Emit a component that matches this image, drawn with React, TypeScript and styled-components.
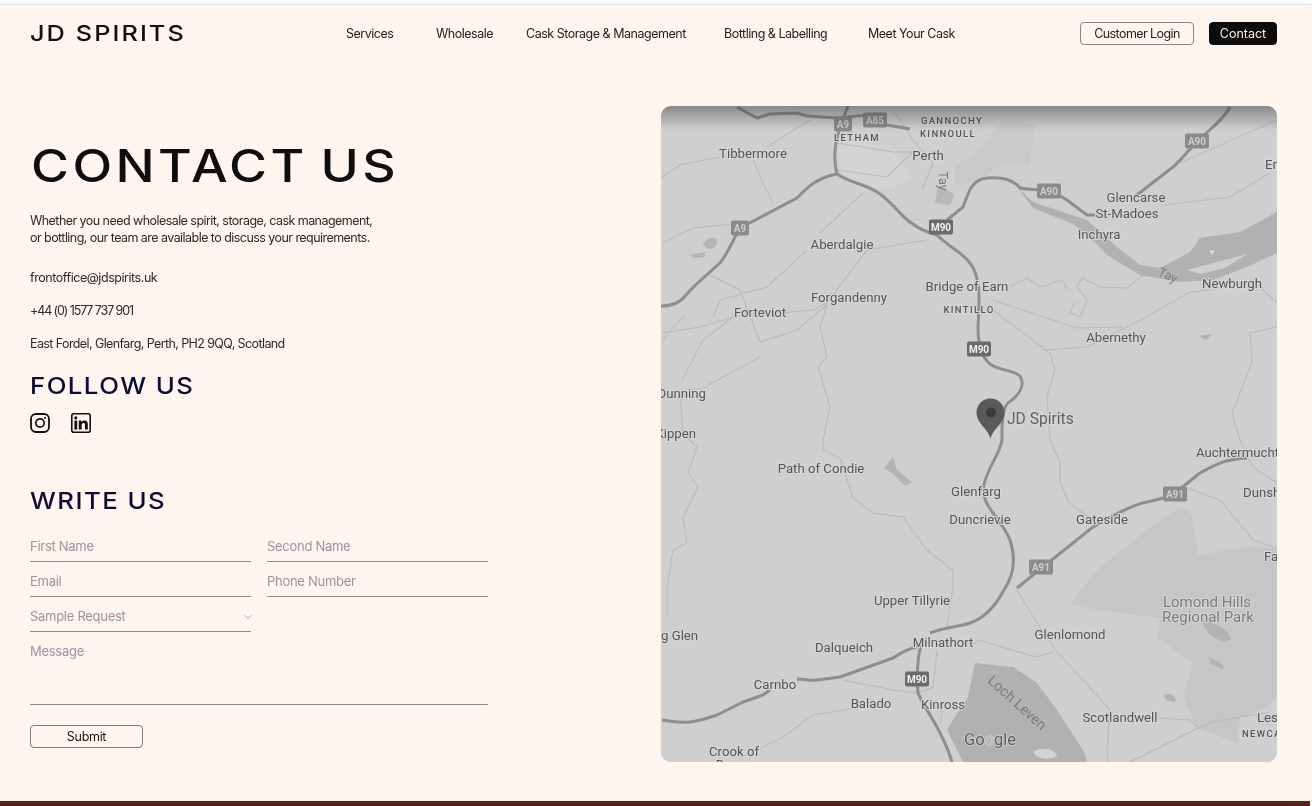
import React from 'react';
import styled, { createGlobalStyle } from 'styled-components';
import { ChevronDown } from 'lucide-react';

const GlobalStyle = createGlobalStyle`
  html, body {
    margin: 0;
    padding: 0;
    background: #f6f5f4;
  }
  * {
    box-sizing: border-box;
  }
`;

const Page = styled.div`
  width: 1312px;
  height: 806px;
  display: flex;
  flex-direction: column;
  overflow: hidden;
  font-family: Inter, "Liberation Sans", sans-serif;
  color: #1b1a1a;
  filter: blur(0.3px);
`;

const TopEdge = styled.div`
  height: 5px;
  flex: none;
  background: #fbfbfb;
  border-bottom: 1px solid #e1e3e5;
`;

const Canvas = styled.div`
  flex: 1;
  margin-right: 2px;
  background: #fff5ef;
  display: flex;
  flex-direction: column;
`;

const Header = styled.header`
  height: 101px;
  flex: none;
  display: grid;
  grid-template-columns: 316px 1fr auto;
  align-items: start;
  padding: 17px 33px 0 30px;
`;

const Logo = styled.div`
  font-size: 22px;
  line-height: 22px;
  font-weight: 500;
  letter-spacing: 1.8px;
  color: #111;
  white-space: nowrap;
  transform: scaleX(1.15);
  transform-origin: left center;
`;

const Nav = styled.nav`
  display: grid;
  grid-template-columns: 90px 90px 198px 144px auto;
  height: 23px;
  align-items: center;
`;

const NavLink = styled.a`
  font-size: 12.5px;
  letter-spacing: -0.48px;
  color: #222;
  white-space: nowrap;
`;

const HeaderActions = styled.div`
  display: flex;
  gap: 15px;
`;

const HeaderButton = styled.button<{ $dark?: boolean }>`
  height: 23px;
  width: ${(p) => (p.$dark ? '68px' : '114px')};
  padding: 0;
  border-radius: 4px;
  border: 1px solid ${(p) => (p.$dark ? '#0c0c0c' : '#8b8583')};
  background: ${(p) => (p.$dark ? '#0c0c0c' : 'transparent')};
  color: ${(p) => (p.$dark ? '#f6f1ee' : '#222')};
  font-family: inherit;
  font-size: 12.5px;
  letter-spacing: ${(p) => (p.$dark ? '0' : '-0.58px')};
`;

const Main = styled.main`
  flex: 1;
  display: grid;
  grid-template-columns: 661px 616px;
  min-height: 0;
`;

const LeftColumn = styled.section`
  padding-left: 30px;
  display: flex;
  flex-direction: column;
  align-items: flex-start;
`;

const Title = styled.h1`
  margin: 35px 0 0 1px;
  font-size: 45px;
  line-height: 50px;
  font-weight: 500;
  letter-spacing: 3px;
  word-spacing: -4px;
  color: #0e0e0e;
  white-space: nowrap;
  transform: scaleX(1.15);
  transform-origin: left center;
`;

const Intro = styled.p`
  margin: 21px 0 0;
  font-size: 12.5px;
  line-height: 17px;
  letter-spacing: -0.55px;
  color: #2b2a2a;
`;

const ContactList = styled.div`
  margin-top: 23px;
  display: flex;
  flex-direction: column;
  gap: 16px;
`;

const ContactLine = styled.div<{ $spacing: number }>`
  font-size: 12.5px;
  line-height: 17px;
  letter-spacing: ${(p) => p.$spacing}px;
  color: #2b2a2a;
`;

const SectionTitle = styled.h2<{ $top: number }>`
  margin: ${(p) => p.$top}px 0 0;
  font-size: 23px;
  line-height: 28px;
  font-weight: 500;
  letter-spacing: 1.3px;
  color: #0c0c33;
  white-space: nowrap;
  transform: scaleX(1.12);
  transform-origin: left center;
`;

const Socials = styled.div`
  margin-top: 13px;
  display: flex;
  gap: 21px;
  color: #111;
`;

const Form = styled.form`
  margin-top: 12px;
  width: 458px;
  display: grid;
  grid-template-columns: 221px 221px;
  column-gap: 16px;
`;

const fieldStyle = `
  width: 100%;
  height: 35px;
  padding: 4px 0 0;
  border: 0;
  border-bottom: 1px solid #8f8994;
  background: transparent;
  outline: none;
  font-family: inherit;
  font-size: 13px;
  letter-spacing: -0.28px;
  color: #9a949e;
  &::placeholder {
    color: #9a949e;
    opacity: 1;
  }
`;

const Input = styled.input`
  ${fieldStyle}
`;

const SelectWrap = styled.div`
  position: relative;
  color: #a29da8;
`;

const Select = styled.select`
  ${fieldStyle}
  appearance: none;
  display: block;
`;

const SelectChevron = styled(ChevronDown)`
  position: absolute;
  right: -3px;
  top: 14px;
`;

const Message = styled.textarea`
  ${fieldStyle}
  grid-column: 1 / 3;
  height: 73px;
  padding-top: 11px;
  resize: none;
  display: block;
`;

const Submit = styled.button`
  margin-top: 20px;
  width: 113px;
  height: 23px;
  padding: 0;
  border: 1px solid #7d7875;
  border-radius: 4px;
  background: transparent;
  font-family: inherit;
  font-size: 12.5px;
  letter-spacing: -0.3px;
  color: #151515;
`;

const MapFrame = styled.div`
  position: relative;
  height: 656px;
  border-radius: 10px;
  overflow: hidden;
  background: #cfcfcf;
`;

const MapDrawing = styled.svg`
  display: block;
  width: 616px;
  height: 656px;
`;

const MapShade = styled.div`
  position: absolute;
  inset: 0 0 auto 0;
  height: 24px;
  background: linear-gradient(to bottom, rgba(40, 40, 40, 0.42), rgba(40, 40, 40, 0));
`;

const PlaceLabel = styled.text<{ $small?: boolean; $park?: boolean }>`
  font-family: Roboto, "Liberation Sans", sans-serif;
  font-size: ${(p) => (p.$small ? '9.5px' : p.$park ? '15px' : '13.2px')};
  font-weight: ${(p) => (p.$small ? 500 : 400)};
  letter-spacing: ${(p) => (p.$small ? '1.35px' : '0')};
  fill: ${(p) => (p.$park ? '#7a7a7a' : '#555')};
  stroke: #d6d6d6;
  stroke-width: 2px;
  paint-order: stroke;
  dominant-baseline: central;
`;

const ShieldText = styled.text`
  font-family: Roboto, "Liberation Sans", sans-serif;
  font-size: 10px;
  font-weight: 700;
  text-anchor: middle;
  dominant-baseline: central;
`;

const PinLabel = styled.text`
  font-family: Roboto, "Liberation Sans", sans-serif;
  font-size: 15.6px;
  fill: #606060;
  stroke: #d6d6d6;
  stroke-width: 2px;
  paint-order: stroke;
  dominant-baseline: central;
`;

const WaterLabel = styled.text<{ $size: number }>`
  font-family: Roboto, "Liberation Sans", sans-serif;
  font-size: ${(p) => p.$size}px;
  fill: #7c7c7c;
  text-anchor: middle;
  dominant-baseline: central;
`;

const GoogleMark = styled.text`
  font-family: Roboto, "Liberation Sans", sans-serif;
  font-size: 16.5px;
  fill: #5b5b5b;
  stroke: #d2d2d2;
  stroke-width: 1.5px;
  paint-order: stroke;
  dominant-baseline: central;
`;

const BottomBar = styled.div`
  height: 5px;
  flex: none;
  background: #5e201c;
`;

type Anchor = 'start' | 'middle' | 'end';

const places: { text: string; x: number; y: number; anchor?: Anchor; small?: boolean; park?: boolean }[] = [
  { text: 'Tibbermore', x: 753, y: 153 },
  { text: 'Perth', x: 928, y: 155 },
  { text: 'LETHAM', x: 857, y: 137, small: true },
  { text: 'GANNOCHY', x: 952, y: 120, small: true },
  { text: 'KINNOULL', x: 948, y: 133, small: true },
  { text: 'Er', x: 1265, y: 164, anchor: 'start' },
  { text: 'Glencarse', x: 1136, y: 197 },
  { text: 'St-Madoes', x: 1127, y: 213 },
  { text: 'Inchyra', x: 1099, y: 234 },
  { text: 'Aberdalgie', x: 842, y: 244 },
  { text: 'Forgandenny', x: 849, y: 297 },
  { text: 'Forteviot', x: 760, y: 312 },
  { text: 'Bridge of Earn', x: 967, y: 286 },
  { text: 'KINTILLO', x: 969, y: 309, small: true },
  { text: 'Newburgh', x: 1232, y: 283 },
  { text: 'Abernethy', x: 1116, y: 337 },
  { text: 'Dunning', x: 706, y: 393, anchor: 'end' },
  { text: 'Kippen', x: 696, y: 433, anchor: 'end' },
  { text: 'Path of Condie', x: 821, y: 468 },
  { text: 'Auchtermuchty', x: 1196, y: 452, anchor: 'start' },
  { text: 'Dunshelt', x: 1243, y: 492, anchor: 'start' },
  { text: 'Glenfarg', x: 976, y: 491 },
  { text: 'Duncrievie', x: 980, y: 519 },
  { text: 'Gateside', x: 1102, y: 519 },
  { text: 'Falkland', x: 1264, y: 556, anchor: 'start' },
  { text: 'Upper Tillyrie', x: 912, y: 600 },
  { text: 'Lomond Hills', x: 1207, y: 602, park: true },
  { text: 'Regional Park', x: 1208, y: 617, park: true },
  { text: 'g Glen', x: 661, y: 635, anchor: 'start' },
  { text: 'Glenlomond', x: 1070, y: 634 },
  { text: 'Milnathort', x: 943, y: 642 },
  { text: 'Dalqueich', x: 844, y: 647 },
  { text: 'Carnbo', x: 775, y: 684 },
  { text: 'Balado', x: 871, y: 703 },
  { text: 'Kinross', x: 943, y: 704 },
  { text: 'Scotlandwell', x: 1120, y: 717 },
  { text: 'Leslie', x: 1257, y: 717, anchor: 'start' },
  { text: 'NEWCASTLE', x: 1242, y: 733, anchor: 'start', small: true },
  { text: 'Crook of', x: 734, y: 751 },
  { text: 'Devon', x: 734, y: 764 },
];

const shields: { text: string; x: number; y: number; motorway?: boolean }[] = [
  { text: 'A9', x: 843, y: 124 },
  { text: 'A85', x: 875, y: 120 },
  { text: 'A90', x: 1197, y: 141 },
  { text: 'A90', x: 1049, y: 191 },
  { text: 'A9', x: 740, y: 228 },
  { text: 'M90', x: 941, y: 227, motorway: true },
  { text: 'M90', x: 979, y: 349, motorway: true },
  { text: 'A91', x: 1175, y: 494 },
  { text: 'A91', x: 1041, y: 567 },
  { text: 'M90', x: 917, y: 679, motorway: true },
];

const mainRoads = [
  'M661 306 C672 306 680 303 686 295 C695 284 708 274 720 263 C728 253 733 240 740 228 L797 198 C805 190 815 178 837 174 C833 160 835 143 838 134 C841 124 845 114 848 106',
  'M837 174 C852 184 867 184 880 194 C895 205 902 218 913 224 C920 230 930 233 937 235 C950 248 962 252 970 263 C982 278 979 305 978 327 C978 342 980 355 990 364 C1000 371 1014 370 1020 376 C1026 386 1018 396 1008 403 C1001 410 1002 430 1002 440 C1000 455 985 470 983 490 C984 508 1002 520 1010 540 C1016 558 1014 575 1004 590 C996 605 985 618 970 623 C958 627 945 627 930 633',
  'M921 645 C917 660 917 680 918 693 C925 708 935 722 941 735 C946 745 950 755 952 762',
  'M947 220 L963 207 C968 195 970 183 982 179 C992 177 1010 176 1020 188 C1030 190 1040 190 1050 190 L1067 200 L1087 215 L1095 215',
  'M1230 107 C1224 120 1208 130 1197 142 C1190 148 1185 156 1173 167 L1133 198',
  'M1017 588 L1043 567 L1093 527 C1105 520 1130 505 1147 502 C1160 499 1170 497 1175 493 L1200 473 C1215 465 1225 459 1247 458',
  'M662 720 C675 722 682 723 690 722 C700 721 708 718 717 715 L743 702 L763 695 L770 690',
  'M797 679 C805 679 810 681 817 680 L840 677 L893 658 C900 654 906 649 917 647',
  'M737 107 L757 118 L770 114 L797 113 L807 116 L837 118 L867 115 L887 125 L910 129',
];

const minorRoads = [
  'M662 177 L680 165 L720 157',
  'M753 160 L763 183 L773 203',
  'M767 147 L810 120',
  'M662 243 L693 228 L732 224',
  'M820 233 L863 193',
  'M710 275 L740 290 L760 342',
  'M713 317 L720 300 L767 287 L807 250',
  'M662 333 L700 327 L733 317 L813 310 L827 303 L867 250 L927 240',
  'M760 342 L797 330 L827 305',
  'M827 305 L820 327 L827 357 L818 367 L830 407 L823 440 L823 450 L840 458 L853 498 L873 513 L903 517 L927 550 L953 570 L953 587 L947 627',
  'M682 380 L703 340 L733 317',
  'M760 357 L703 388 L680 393 L683 433 L697 447 L688 473 L698 487 L683 517 L687 543 L673 550 L667 590 L667 617',
  'M1010 287 L1027 278 L1040 287 L1063 280 L1067 290',
  'M1077 287 L1082 278 L1100 287 L1127 288 L1143 275',
  'M1077 287 L1087 300 L1080 317 L1070 313 L1075 302',
  'M993 310 L1050 353 L1055 370 L1047 397 L1050 440 L1060 463 L1060 480 L1068 502 L1090 518',
  'M1043 350 L1087 347 L1137 322 L1190 292 L1210 290',
  'M993 300 L1077 328 L1123 327',
  'M1165 205 L1230 197 L1270 173',
  'M1180 163 L1277 120',
  'M1277 327 L1250 333 L1252 363 L1232 413 L1240 440 L1253 467 L1277 483',
  'M1187 488 L1220 500 L1253 540 L1277 548',
  'M1260 287 L1277 303',
  'M1017 590 L1037 623 L1057 652 L1083 680 L1110 710 L1107 750 L1108 762',
  'M973 643 L980 640 L1035 657 L1053 652',
  'M1158 718 L1190 720 L1198 728 L1213 722 L1270 712',
  'M1198 728 L1130 762',
  'M843 680 L893 690 L917 693',
  'M857 708 L813 715 L783 737 L740 758',
  'M937 650 L933 687 L917 693',
  'M943 710 L940 723',
  'M837 143 L893 152 L913 152 L887 177 L837 170',
  'M922 190 L933 163 L913 140 L893 110',
  'M662 340 L685 315',
];

const mapBlobs = [
  { d: 'M1070 605 C1085 585 1095 570 1113 557 C1135 540 1160 518 1180 508 C1190 510 1193 515 1193 520 L1198 555 L1247 547 L1277 548 L1277 697 L1265 708 L1240 718 L1237 743 L1197 728 L1183 697 L1193 663 L1157 637 L1160 618 L1113 612 Z', fill: '#c6c6c6' },
  { d: 'M1202 620 C1215 622 1232 632 1230 640 C1222 644 1205 636 1202 620 Z', fill: '#b3b3b3' },
  { d: 'M1209 657 L1222 664 L1224 670 L1211 664 Z', fill: '#b3b3b3' },
  { d: 'M1164 695 C1170 692 1176 696 1176 701 C1170 703 1164 700 1164 695 Z', fill: '#b3b3b3' },
  { d: 'M975 663 L1013 667 L1037 683 L1057 710 L1083 750 L1087 762 L963 762 L947 730 L953 720 L968 697 Z', fill: '#b1b1b1' },
  { d: 'M1033 752 C1042 746 1055 749 1057 756 C1050 760 1038 760 1033 752 Z', fill: '#d4d4d4' },
  { d: 'M1017 187 L1033 202 L1087 220 L1117 247 L1140 265 L1160 268 L1190 252 L1200 238 L1240 232 L1277 212 L1277 253 L1247 267 L1213 280 L1180 282 L1140 275 L1107 255 L1093 240 L1073 224 L1033 208 Z', fill: '#b1b1b1' },
  { d: 'M1187 270 L1213 263 L1247 254 L1225 268 L1200 274 Z', fill: '#cfcfcf' },
  { d: 'M1209 251 L1215 250 L1212 255 Z', fill: '#dcdcdc' },
  { d: 'M893 457 L897 470 L912 482 L905 486 L893 474 L884 468 Z', fill: '#b4b4b4' },
  { d: 'M703 244 C708 236 718 236 717 243 C715 250 705 251 703 244 Z', fill: '#b4b4b4' },
  { d: 'M689 255 L705 252 L705 257 L695 258 Z', fill: '#b4b4b4' },
  { d: 'M1199 336 L1212 334 L1206 340 Z', fill: '#b1b1b1' },
  { d: 'M955 165 L975 155 L1003 120 L1035 125 L1030 165 L1000 165 L980 180 L955 185 Z', fill: '#c9c9c9' },
  { d: 'M938 185 L955 195 L950 205 L935 203 Z', fill: '#b8b8b8' },
  { d: 'M837 140 L895 147 L910 180 L880 190 L840 172 Z', fill: '#d3d3d3' },
];

const RoadMap: React.FC = () => (
  <MapDrawing viewBox="661 106 616 656" aria-label="Map of the area around JD Spirits">
    <rect x="661" y="106" width="616" height="656" fill="#cfcfcf" />
    {mapBlobs.map((blob) => (
      <path key={blob.d} d={blob.d} fill={blob.fill} />
    ))}
    {minorRoads.map((d) => (
      <path key={d} d={d} fill="none" stroke="#bababa" strokeWidth="1.1" />
    ))}
    {mainRoads.map((d) => (
      <path key={d} d={d} fill="none" stroke="#8e8e8e" strokeWidth="3" strokeLinejoin="round" />
    ))}
    <WaterLabel $size={12.5} x="1168" y="275" transform="rotate(25 1168 275)">Tay</WaterLabel>
    <WaterLabel $size={12.5} x="943" y="181" transform="rotate(90 943 181)">Tay</WaterLabel>
    <WaterLabel $size={14.5} x="1017" y="703" transform="rotate(42 1017 703)">Loch Leven</WaterLabel>
    {shields.map((s) => (
      <g key={`${s.text}-${s.x}`}>
        <rect
          x={s.x - (s.text.length > 2 ? 12 : 9)}
          y={s.y - 7.5}
          width={s.text.length > 2 ? 24 : 18}
          height="15"
          rx="2"
          fill={s.motorway ? '#6a6a6a' : '#8b8b8b'}
        />
        <ShieldText x={s.x} y={s.y} fill={s.motorway ? '#f0f0f0' : '#cdcdcd'}>
          {s.text}
        </ShieldText>
      </g>
    ))}
    {places.map((p) => (
      <PlaceLabel key={p.text} x={p.x} y={p.y} textAnchor={p.anchor ?? 'middle'} $small={p.small} $park={p.park}>
        {p.text}
      </PlaceLabel>
    ))}
    <path
      d="M990.5 439 C988 428 976.5 424 976.5 412.5 C976.5 404.5 983 398.5 990.5 398.5 C998 398.5 1004.5 404.5 1004.5 412.5 C1004.5 424 993 428 990.5 439 Z"
      fill="#5a5a5a"
    />
    <circle cx="991" cy="412.5" r="5" fill="#3a3a3a" />
    <PinLabel x="1007" y="419">JD Spirits</PinLabel>
    <GoogleMark x="964" y="739">
      Go<tspan fill="#b8b8b8">o</tspan>gle
    </GoogleMark>
  </MapDrawing>
);

const InstagramIcon: React.FC = () => (
  <svg width="20" height="20" viewBox="0 0 20 20" fill="none" stroke="currentColor">
    <rect x="1" y="1" width="18" height="18" rx="5" strokeWidth="1.8" />
    <circle cx="10" cy="10" r="4.2" strokeWidth="1.7" />
    <circle cx="15" cy="5" r="1" fill="currentColor" stroke="none" />
  </svg>
);

const LinkedinIcon: React.FC = () => (
  <svg width="20" height="20" viewBox="0 0 20 20" fill="none">
    <rect x="0.8" y="0.8" width="18.4" height="18.4" rx="2" stroke="currentColor" strokeWidth="1.6" />
    <rect x="3.4" y="7.6" width="2.8" height="9" fill="currentColor" />
    <circle cx="4.8" cy="4.9" r="1.6" fill="currentColor" />
    <path
      d="M7.8 7.6H10.5V8.9C11.1 8 12.2 7.4 13.4 7.4C15.9 7.4 16.8 9 16.8 11.2V16.6H14V11.8C14 10.6 13.6 9.9 12.6 9.9C11.4 9.9 10.6 10.7 10.6 11.9V16.6H7.8Z"
      fill="currentColor"
    />
  </svg>
);

const App: React.FC = () => {
  return (
    <Page>
      <GlobalStyle />
      <TopEdge />
      <Canvas>
        <Header>
          <Logo>JD SPIRITS</Logo>
          <Nav>
            <NavLink>Services</NavLink>
            <NavLink>Wholesale</NavLink>
            <NavLink>Cask Storage &amp; Management</NavLink>
            <NavLink>Bottling &amp; Labelling</NavLink>
            <NavLink>Meet Your Cask</NavLink>
          </Nav>
          <HeaderActions>
            <HeaderButton>Customer Login</HeaderButton>
            <HeaderButton $dark>Contact</HeaderButton>
          </HeaderActions>
        </Header>
        <Main>
          <LeftColumn>
            <Title>CONTACT US</Title>
            <Intro>
              Whether you need wholesale spirit, storage, cask management,
              <br />
              or bottling, our team are available to discuss your requirements.
            </Intro>
            <ContactList>
              <ContactLine $spacing={-0.45}>frontoffice@jdspirits.uk</ContactLine>
              <ContactLine $spacing={-1.1}>+44 (0) 1577 737 901</ContactLine>
              <ContactLine $spacing={-0.6}>East Fordel, Glenfarg, Perth, PH2 9QQ, Scotland</ContactLine>
            </ContactList>
            <SectionTitle $top={20}>FOLLOW US</SectionTitle>
            <Socials>
              <InstagramIcon />
              <LinkedinIcon />
            </Socials>
            <SectionTitle $top={54}>WRITE US</SectionTitle>
            <Form>
              <Input placeholder="First Name" />
              <Input placeholder="Second Name" />
              <Input placeholder="Email" />
              <Input placeholder="Phone Number" />
              <SelectWrap>
                <Select defaultValue="">
                  <option value="">Sample Request</option>
                </Select>
                <SelectChevron size={12} strokeWidth={2} />
              </SelectWrap>
              <div />
              <Message placeholder="Message" />
            </Form>
            <Submit type="button">Submit</Submit>
          </LeftColumn>
          <MapFrame>
            <RoadMap />
            <MapShade />
          </MapFrame>
        </Main>
        <BottomBar />
      </Canvas>
    </Page>
  );
};

export default App;
